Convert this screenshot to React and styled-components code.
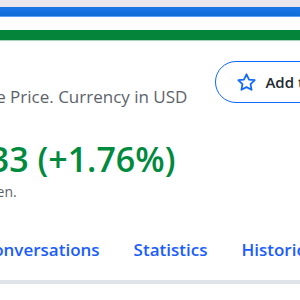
import React from 'react';
import styled, { createGlobalStyle } from 'styled-components';

const GlobalStyle = createGlobalStyle`
  html, body {
    margin: 0;
    padding: 0;
    background: #ffffff;
    overflow: hidden;
  }
  body {
    font-family: "Open Sans", "Noto Sans", Arial, sans-serif;
  }
`;

const tabs = ['Summary', 'Chart', 'Conversations', 'Statistics', 'Historical Data'];

const App = () => (
  <>
    <GlobalStyle />
    <Page>
      <TopBand />
      <BlueBar />
      <Spacer />
      <GreenBar />
      <Header>
        <Quote>
          <Exchange>NasdaqGM – Real Time Price. Currency in USD</Exchange>
          <PriceRow>
            <Price>182.52</Price>
            <Change>+3.33 (+1.76%)</Change>
          </PriceRow>
          <Note>At close 4:00PM Market open.</Note>
        </Quote>
        <WatchButton>
          <StarIcon />
          Add to watchlist
        </WatchButton>
      </Header>
      <TabBar>
        {tabs.map((t) => (
          <Tab key={t}>{t}</Tab>
        ))}
      </TabBar>
    </Page>
  </>
);

const StarIcon = () => (
  <svg width="21" height="21" viewBox="0 0 24 24" fill="none" stroke="#0f69ff" strokeWidth="2" strokeLinejoin="round">
    <path d="M12 2.6l2.9 6 6.5.8-4.8 4.5 1.2 6.5L12 17.3l-5.8 3.1 1.2-6.5-4.8-4.5 6.5-.8z" />
  </svg>
);

const Page = styled.div`
  width: 300px;
  height: 300px;
  overflow: hidden;
  display: flex;
  flex-direction: column;
`;

const TopBand = styled.div`
  height: 7px;
  background: #e9e7ed;
`;

const BlueBar = styled.div`
  height: 9px;
  background: linear-gradient(#1a78e6, #0f6bd8);
  border-bottom: 1px solid #5aa0f2;
`;

const Spacer = styled.div`
  height: 13px;
  background: #fdfdfd;
`;

const GreenBar = styled.div`
  height: 10px;
  background: #03843a;
  border-bottom: 1px solid #a9d6b8;
`;

const Header = styled.div`
  display: flex;
  align-items: flex-start;
  margin-left: -177px;
  padding-top: 20px;
  gap: 28px;
`;

const Quote = styled.div`
  display: flex;
  flex-direction: column;
  flex-shrink: 0;
`;

const Exchange = styled.div`
  margin-top: 26px;
  font-size: 17px;
  line-height: 20px;
  color: #5b636a;
  white-space: nowrap;
`;

const PriceRow = styled.div`
  display: flex;
  align-items: baseline;
  gap: 12px;
  margin-top: 31px;
  height: 42px;
  white-space: nowrap;
`;

const Price = styled.span`
  font-size: 34px;
  font-weight: 600;
  line-height: 42px;
  color: #232a31;
`;

const Change = styled.span`
  font-size: 34px;
  font-weight: 600;
  line-height: 42px;
  color: #008a3e;
`;

const Note = styled.div`
  margin-top: 4px;
  font-size: 14px;
  line-height: 16px;
  color: #5b636a;
  white-space: nowrap;
`;

const WatchButton = styled.button`
  flex-shrink: 0;
  display: flex;
  align-items: center;
  gap: 8px;
  height: 42px;
  padding: 0 20px;
  border: 1px solid #0f69ff;
  border-radius: 21px;
  background: #ffffff;
  font-family: inherit;
  font-size: 15px;
  font-weight: 600;
  color: #232a31;
  white-space: nowrap;
`;

const TabBar = styled.div`
  display: flex;
  gap: 34px;
  margin-left: -210px;
  margin-top: 38px;
  padding-bottom: 19px;
  border-bottom: 4px solid #e0e4e9;
  white-space: nowrap;
`;

const Tab = styled.div`
  font-size: 17px;
  font-weight: 600;
  color: #1a5cff;
`;

export default App;
